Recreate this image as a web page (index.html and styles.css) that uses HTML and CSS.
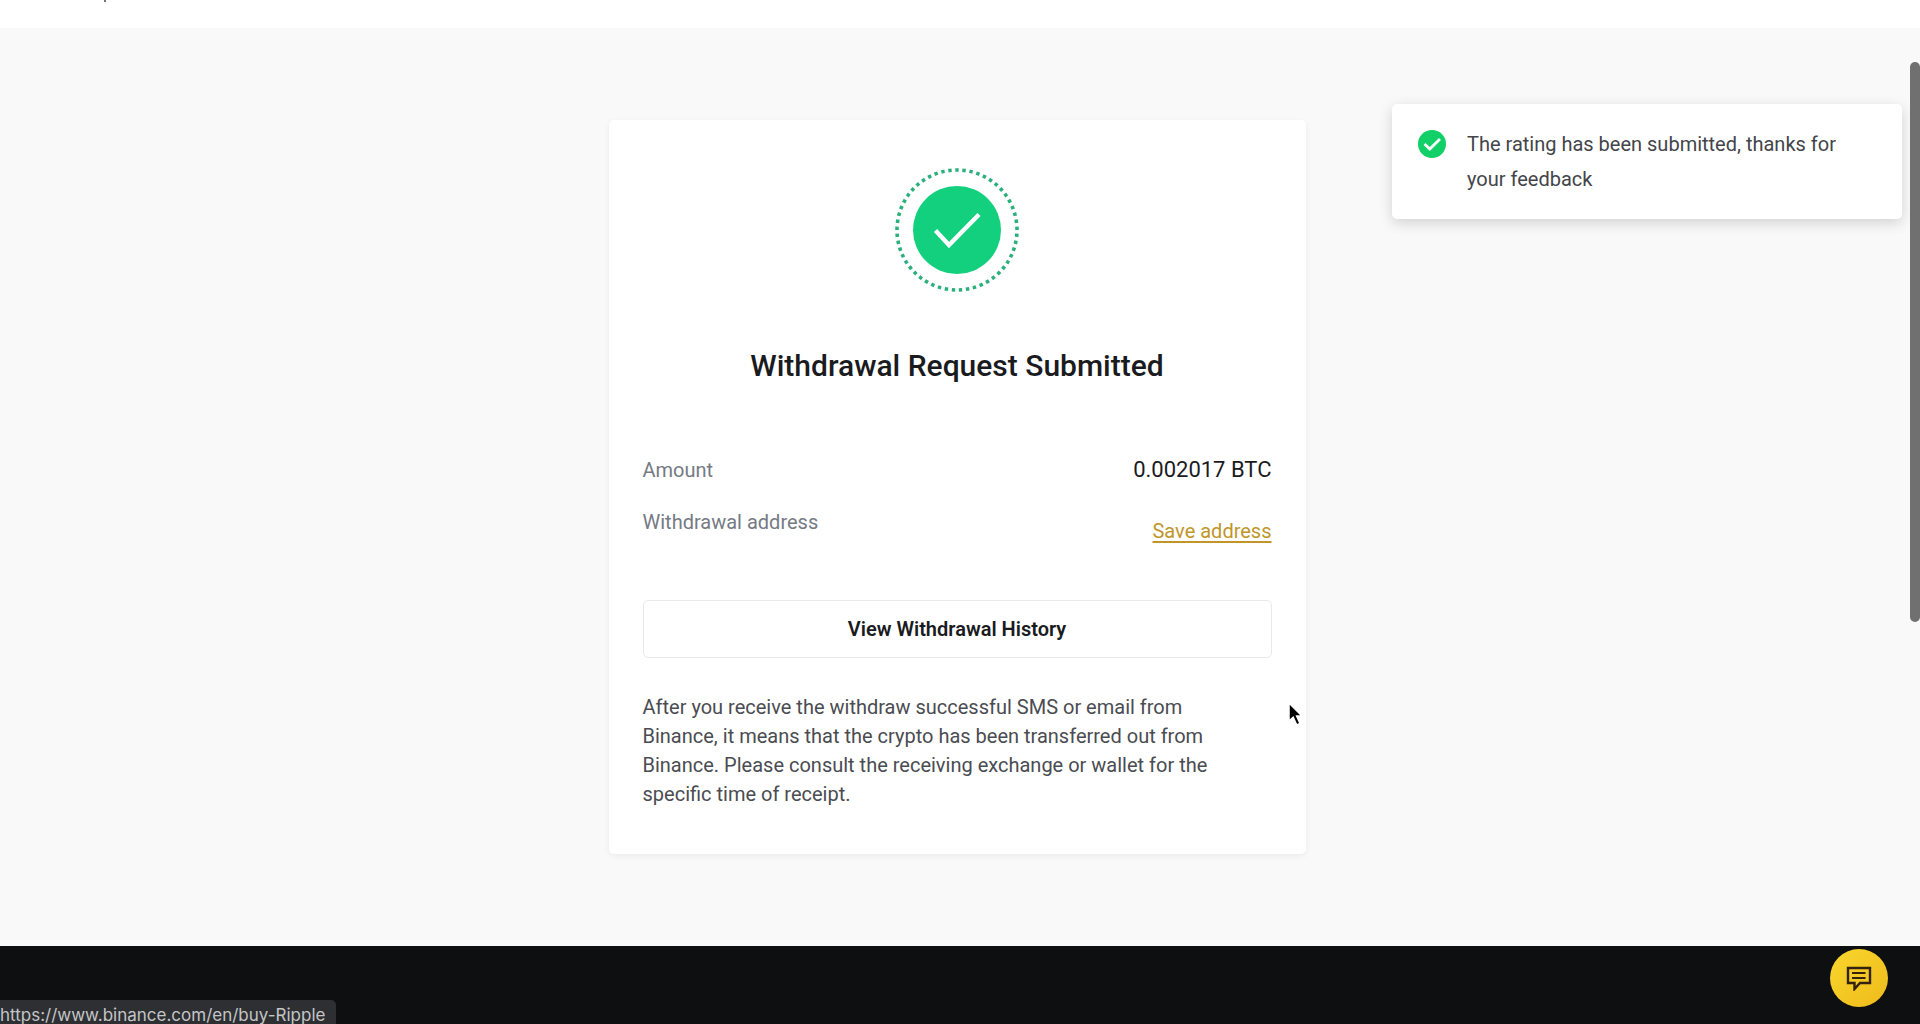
FILE: index.html
```
<!DOCTYPE html>
<html lang="en">
<head>
  <meta charset="UTF-8">
  <meta name="viewport" content="width=device-width, initial-scale=1.0">
  <title>Withdrawal | Binance</title>
  <link rel="stylesheet" href="styles.css">
</head>
<body>
  <header class="top-bar"></header>

  <main class="content">
    <section class="card">
      <svg class="success-icon" viewBox="0 0 124 124" aria-hidden="true">
        <circle cx="62" cy="62" r="60" fill="none" stroke="#2bb07c" stroke-width="3.6" pathLength="53" stroke-dasharray="0.48 0.52" stroke-dashoffset="0.24" transform="rotate(-90 62 62)"/>
        <circle cx="62" cy="62" r="44" fill="#12d07e"/>
        <path d="M40.5 62.5 L54 77 L84 46.500" fill="none" stroke="#fff" stroke-width="4.4"/>
      </svg>
      <h1>Withdrawal Request Submitted</h1>

      <dl class="details">
        <div class="row">
          <dt>Amount</dt>
          <dd class="amount">0.002017 BTC</dd>
        </div>
        <div class="row address">
          <dt>Withdrawal address</dt>
          <dd><a href="#">Save address</a></dd>
        </div>
      </dl>

      <button type="button" class="history-btn">View Withdrawal History</button>

      <p class="note">After you receive the withdraw successful SMS or email from Binance, it means that the crypto has been transferred out from Binance. Please consult the receiving exchange or wallet for the specific time of receipt.</p>
    </section>
  </main>

  <footer class="footer"></footer>

  <div class="toast" role="status">
    <svg class="toast-icon" viewBox="0 0 28 28" aria-hidden="true">
      <circle cx="14" cy="14" r="14" fill="#12d068"/>
      <path d="M6.500 14 L11.8 19 L22 9" fill="none" stroke="#fff" stroke-width="2.8"/>
    </svg>
    <p>The rating has been submitted, thanks for your feedback</p>
  </div>

  <button type="button" class="chat-btn" aria-label="Chat">
    <svg viewBox="0 0 26 26" aria-hidden="true">
      <path d="M2 3 H24 V18 H14 L8.500 24 V18 H2 Z" fill="none" stroke="#33230c" stroke-width="2.4"/>
      <path d="M6 8 H19.5 M6 13 H19.5" fill="none" stroke="#33230c" stroke-width="2.2"/>
    </svg>
  </button>

  <div class="link-status">https://www.binance.com/en/buy-Ripple</div>
  <div class="scroll-thumb"></div>

  <svg class="cursor" viewBox="0 0 18 26" aria-hidden="true">
    <path d="M2 2 V20 L6.2 16.2 L9.8 24 L13 22.5 L9.6 15 H15 Z" fill="#000" stroke="#fff" stroke-width="1.5"/>
  </svg>
</body>
</html>
```
FILE: styles.css
```
* {
  box-sizing: border-box;
}

body {
  margin: 0;
  position: relative;
  display: flex;
  flex-direction: column;
  height: 100vh;
  overflow: hidden;
  font-family: Roboto, "Liberation Sans", sans-serif;
  font-size: 20px;
  background-color: #f9f9f9;
  color: #1a1b1e;
}

.top-bar {
  flex: none;
  height: 28px;
  padding-left: 104px;
  background-color: #fff;
}

/* bottom tip of the scrolled-away menu */
.top-bar::before {
  content: "";
  display: block;
  width: 2px;
  height: 2px;
  background-color: #777;
}

.content {
  flex: none;
  display: flex;
  justify-content: center;
  padding: 92px 6px 92px 0;
}

.card {
  width: 100%;
  max-width: 697px;
  padding: 48px 34px 45px;
  border-radius: 5px;
  background-color: #fff;
  box-shadow: 0 2px 6px rgba(0, 0, 0, 0.06);
}

.success-icon {
  display: block;
  width: 124px;
  height: 124px;
  margin: 0 auto;
}

h1 {
  margin: 54px 0 0;
  font-size: 30px;
  line-height: 40px;
  font-weight: 500;
  text-align: center;
}

.details {
  margin: 68px 0 0;
}

.row {
  display: flex;
  justify-content: space-between;
  line-height: 32px;
}

.row dt {
  color: #757a84;
}

.row dd {
  margin: 0;
}

.row .amount {
  font-size: 22px;
}

.row.address {
  margin-top: 20px;
}

.address dd {
  padding-top: 9px;
}

.address a {
  color: #c0962a;
  text-underline-offset: 3px;
}

.history-btn {
  display: block;
  width: 100%;
  height: 58px;
  margin-top: 53px;
  border: 1px solid #e8e9eb;
  border-radius: 5px;
  background-color: #fff;
  color: #1a1b1e;
  font: inherit;
  font-weight: 600;
}

.note {
  margin: 35px 0 0;
  padding-right: 44px;
  line-height: 29px;
  color: #4a4c52;
}

.footer {
  flex: 1;
  background-color: #0d0f11;
}

/* everything below floats over the page */
.toast {
  position: absolute;
  top: 104px;
  right: 18px;
  display: flex;
  gap: 21px;
  width: 510px;
  padding: 23px 48px 22px 26px;
  border-radius: 5px;
  background-color: #fff;
  box-shadow: 0 4px 14px rgba(0, 0, 0, 0.16);
}

.toast p {
  margin: 0;
  line-height: 35px;
  color: #43454a;
}

.toast-icon {
  flex: none;
  width: 28px;
  height: 28px;
  margin-top: 3px;
}

.chat-btn {
  position: absolute;
  right: 32px;
  bottom: 17px;
  display: flex;
  align-items: center;
  justify-content: center;
  width: 58px;
  height: 58px;
  padding: 0;
  border: none;
  border-radius: 50%;
  background: linear-gradient(135deg, #f8d72c, #efba1c);
}

.chat-btn svg {
  width: 26px;
  height: 26px;
}

.link-status {
  position: absolute;
  left: 0;
  bottom: 0;
  height: 24px;
  padding-right: 11px;
  border-radius: 0 5px 0 0;
  background-color: #2e2f32;
  color: #c4c5c7;
  font-family: Inter, sans-serif;
  font-size: 17px;
  line-height: 30px;
  overflow: hidden;
}

.scroll-thumb {
  position: absolute;
  top: 62px;
  right: 0;
  width: 10px;
  height: 560px;
  border-radius: 5px;
  background-color: #707070;
}

.cursor {
  position: absolute;
  top: 701px;
  left: 1287px;
  width: 18px;
  height: 26px;
}
```
